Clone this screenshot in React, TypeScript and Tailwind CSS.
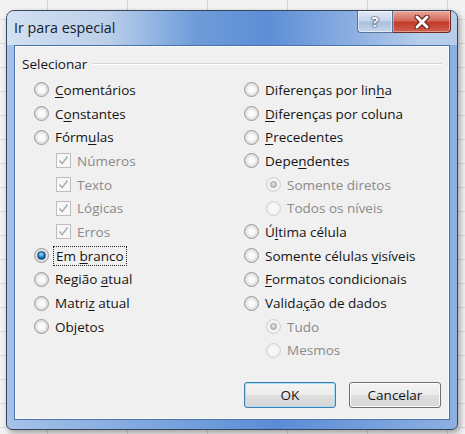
import React from 'react';

type Item = {
  label: string;
  ul?: number;
  kind: 'radio' | 'check' | 'sub';
  checked?: boolean;
  disabled?: boolean;
  focus?: boolean;
};

const leftItems: Item[] = [
  { label: 'Comentários', ul: 0, kind: 'radio' },
  { label: 'Constantes', ul: 1, kind: 'radio' },
  { label: 'Fórmulas', ul: 4, kind: 'radio' },
  { label: 'Números', kind: 'check', checked: true, disabled: true },
  { label: 'Texto', kind: 'check', checked: true, disabled: true },
  { label: 'Lógicas', kind: 'check', checked: true, disabled: true },
  { label: 'Erros', kind: 'check', checked: true, disabled: true },
  { label: 'Em branco', ul: 3, kind: 'radio', checked: true, focus: true },
  { label: 'Região atual', ul: 7, kind: 'radio' },
  { label: 'Matriz atual', ul: 5, kind: 'radio' },
  { label: 'Objetos', ul: 2, kind: 'radio' },
];

const rightItems: Item[] = [
  { label: 'Diferenças por linha', ul: 18, kind: 'radio' },
  { label: 'Diferenças por coluna', ul: 0, kind: 'radio' },
  { label: 'Precedentes', ul: 0, kind: 'radio' },
  { label: 'Dependentes', ul: 4, kind: 'radio' },
  { label: 'Somente diretos', kind: 'sub', checked: true, disabled: true },
  { label: 'Todos os níveis', kind: 'sub', disabled: true },
  { label: 'Última célula', ul: 1, kind: 'radio' },
  { label: 'Somente células visíveis', ul: 16, kind: 'radio' },
  { label: 'Formatos condicionais', ul: 0, kind: 'radio' },
  { label: 'Validação de dados', ul: 6, kind: 'radio' },
  { label: 'Tudo', kind: 'sub', checked: true, disabled: true },
  { label: 'Mesmos', kind: 'sub', disabled: true },
];

//* 단축키 글자 밑줄
const Label: React.FC<{ text: string; ul?: number }> = ({ text, ul }) => {
  if (ul === undefined) return <>{text}</>;
  return (
    <>
      {text.slice(0, ul)}
      <span className="underline underline-offset-[2px]">{text[ul]}</span>
      {text.slice(ul + 1)}
    </>
  );
};

const Radio: React.FC<{ checked?: boolean; disabled?: boolean }> = ({ checked, disabled }) => (
  <span
    className={
      disabled
        ? 'flex h-[15px] w-[15px] shrink-0 items-center justify-center rounded-full border border-[#cfcfcf] bg-[radial-gradient(circle_at_50%_50%,#f7f7f7_40%,#e6e6e6)]'
        : 'flex h-[15px] w-[15px] shrink-0 items-center justify-center rounded-full border border-[#9a9a9a] bg-[radial-gradient(circle_at_50%_50%,#fbfbfb_30%,#d6d6d6_75%,#f4f4f4)]'
    }
  >
    {checked && !disabled && (
      <span className="h-[9px] w-[9px] rounded-full border border-[#1d4e78] bg-[radial-gradient(circle_at_45%_35%,#9fe3ff,#2a86c4_45%,#0c3d66_85%)]" />
    )}
    {checked && disabled && (
      <span className="h-[7px] w-[7px] rounded-full border border-[#9d9d9d] bg-[radial-gradient(circle_at_45%_35%,#e8e8e8,#a9a9a9)]" />
    )}
  </span>
);

const Check: React.FC = () => (
  <span className="flex h-[15px] w-[15px] shrink-0 items-center justify-center border border-[#bdbdbd] bg-[#f7f7f7]">
    <svg width="11" height="11" viewBox="0 0 11 11">
      <path d="M1.5 5.5 L4.2 8.6 L9.5 1.5" fill="none" stroke="#a8a8a8" strokeWidth="1.4" />
    </svg>
  </span>
);

const Row: React.FC<{ item: Item }> = ({ item }) => {
  const indent = item.kind !== 'radio';
  return (
    <div className={`flex h-[23.7px] items-center ${indent ? 'pl-[22px]' : ''}`}>
      {item.kind === 'check' ? <Check /> : <Radio checked={item.checked} disabled={item.disabled} />}
      <span
        className={`ml-[6px] whitespace-nowrap leading-[16px] ${item.disabled ? 'text-[#8a8a8a]' : 'text-[#141414]'} ${
          item.focus ? 'px-[1px] -ml-[-5px] outline outline-1 outline-dotted outline-[#222] outline-offset-[1px]' : ''
        }`}
      >
        <Label text={item.label} ul={item.ul} />
      </span>
    </div>
  );
};

const DialogButton: React.FC<{ label: string; primary?: boolean }> = ({ label, primary }) => (
  <button
    type="button"
    className={`flex h-[26px] w-[92px] items-center justify-center rounded-[3px] border bg-[linear-gradient(180deg,#f4f4f4_0%,#ececec_48%,#dedede_52%,#d6d6d6_100%)] text-[13.5px] font-medium text-[#141414] ${
      primary
        ? 'border-[#3c7fb1] shadow-[inset_0_0_0_1px_#a9dcf5]'
        : 'border-[#707070] shadow-[inset_0_0_0_1px_#fbfbfb]'
    }`}
  >
    {label}
  </button>
);

export default function App() {
  return (
    <div
      className="h-[434px] w-[465px] overflow-hidden bg-[#f2f2f2] bg-[linear-gradient(90deg,transparent_47px,#d4d4d4_47px,#d4d4d4_48px,transparent_48px),linear-gradient(180deg,transparent_19px,#dadada_19px,#dadada_20px,transparent_20px)] bg-[length:80px_100%,100%_24px] pl-[6px] pt-[10px]"
      style={{ fontFamily: '"Open Sans", "Noto Sans", sans-serif' }}
    >
      <div className="flex h-[420px] w-[452px] flex-col rounded-b-[6px] rounded-t-[8px] border border-[#34455c] bg-[linear-gradient(90deg,#a6c2e8_0%,#6d9bdb_45%,#5a8cd6_60%,#8db0e2_100%)] shadow-[2px_3px_6px_rgba(0,0,0,0.35)]">
        {/* 제목 표시줄 */}
        <div className="flex h-[34px] items-start rounded-t-[7px] bg-[linear-gradient(90deg,#d2e0f1_0%,#bcd0ea_22%,#6e9cda_42%,#5d8ed6_58%,#8fb1e2_78%,#b6cdeb_92%)] pl-[7px] pr-[6px]">
          <span className="mt-[8px] text-[14.3px] font-medium leading-[18px] text-[#16202c]">Ir para especial</span>
          <div className="flex-1" />
          <div className="flex">
            <div className="flex h-[22px] w-[36px] items-center justify-center rounded-bl-[4px] border border-t-0 border-[#5b7393] bg-[linear-gradient(180deg,#e3ebf5_0%,#c4d4ea_48%,#a9bfdc_52%,#c6d7ee_100%)] shadow-[inset_0_0_0_1px_rgba(255,255,255,0.5)]">
              <span className="text-[15px] font-bold leading-none text-white [text-shadow:0_0_1px_#2c3e55,0_0_1px_#2c3e55,0_0_2px_#2c3e55]">?</span>
            </div>
            <div className="flex h-[22px] w-[58px] items-center justify-center rounded-br-[4px] border border-l-0 border-t-0 border-[#6e2a24] bg-[linear-gradient(180deg,#e9a89c_0%,#d46a5b_45%,#c23a2a_55%,#d2604e_100%)] shadow-[inset_0_0_0_1px_rgba(255,220,210,0.45)]">
              <svg width="16" height="14" viewBox="0 0 16 14">
                <path d="M3 2 L13 12 M13 2 L3 12" stroke="#5a1a14" strokeWidth="5" strokeLinecap="round" />
                <path d="M3 2 L13 12 M13 2 L3 12" stroke="#ffffff" strokeWidth="3" strokeLinecap="round" />
              </svg>
            </div>
          </div>
        </div>

        {/* 본문 */}
        <div className="mx-[7px] mb-[9px] flex flex-1 border border-[#4a72a8]">
          <div className="flex flex-1 flex-col border border-[#f8fbff] bg-[#f0f0f0] text-[13.5px] font-medium">
            <div className="mt-[8px] flex items-center pl-[6px] pr-[6px]">
              <span className="leading-[18px] text-[#141414]">Selecionar</span>
              <div className="ml-[5px] h-[2px] flex-1 border-b border-t border-b-white border-t-[#d5d5d5]" />
            </div>
            <div className="mt-[5px] grid grid-cols-[210px_1fr]">
              <div className="flex flex-col pl-[18px]">
                {leftItems.map((item) => (
                  <Row key={item.label} item={item} />
                ))}
              </div>
              <div className="flex flex-col pl-[18px]">
                {rightItems.map((item) => (
                  <Row key={item.label} item={item} />
                ))}
              </div>
            </div>
            <div className="mt-auto flex justify-end gap-[13px] pb-[10px] pr-[7px]">
              <DialogButton label="OK" primary />
              <DialogButton label="Cancelar" />
            </div>
          </div>
        </div>
      </div>
    </div>
  );
}
